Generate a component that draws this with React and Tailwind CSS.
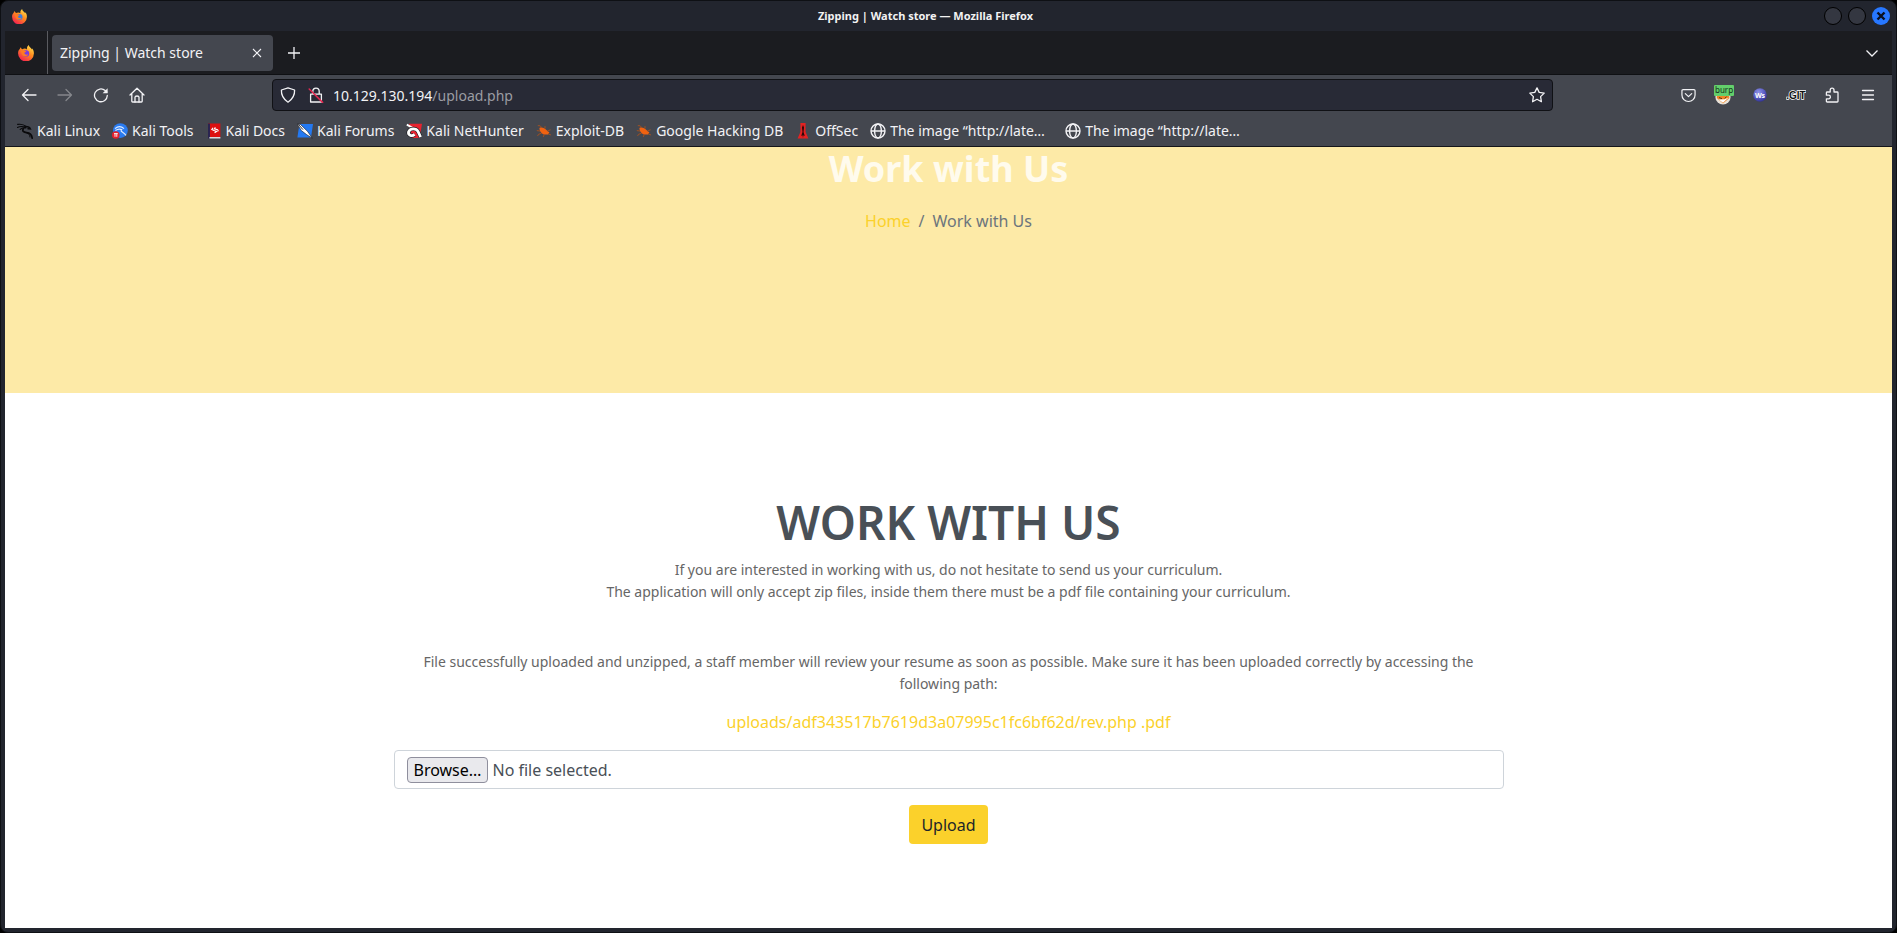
import { useState } from 'react'

const UI_FONT = 'font-["Noto_Sans",sans-serif]'

// label, icon component, and whether the title is cut off
const BOOKMARKS = [
  { label: 'Kali Linux', Icon: KaliIcon },
  { label: 'Kali Tools', Icon: KaliToolsIcon },
  { label: 'Kali Docs', Icon: KaliDocsIcon },
  { label: 'Kali Forums', Icon: KaliForumsIcon },
  { label: 'Kali NetHunter', Icon: NetHunterIcon },
  { label: 'Exploit-DB', Icon: BugIcon },
  { label: 'Google Hacking DB', Icon: BugIcon },
  { label: 'OffSec', Icon: OffSecIcon },
  { label: 'The image “http://late…', Icon: GlobeIcon, wide: true },
  { label: 'The image “http://late…', Icon: GlobeIcon, wide: true },
]

export default function App() {
  return (
    <div className={`min-h-screen bg-black flex flex-col ${UI_FONT}`}>
      <div className="flex-1 flex flex-col rounded-lg border border-[#0e1014] bg-[#22252e] overflow-hidden">
        <TitleBar />
        <div className="flex-1 flex flex-col mx-1 mb-1">
          <TabStrip />
          <NavBar />
          <BookmarksBar />
          <Page />
        </div>
      </div>
    </div>
  )
}

function TitleBar() {
  return (
    <header className="h-[30px] flex items-center gap-1 pl-[11px] pr-[6px]">
      <FirefoxIcon className="size-[15px]" core="#3b7de0" />
      <h1 className="flex-1 text-center text-[11px] font-bold text-[#f2f2f2]">
        Zipping | Watch store — Mozilla Firefox
      </h1>
      <div className="flex gap-[6px]">
        <button type="button" aria-label="Minimize" className="size-[18px] rounded-full border border-black bg-[#343741]" />
        <button type="button" aria-label="Maximize" className="size-[18px] rounded-full border border-black bg-[#343741]" />
        <button
          type="button"
          aria-label="Close window"
          className="size-[18px] rounded-full bg-[#2777ff] flex items-center justify-center"
        >
          <svg viewBox="0 0 10 10" className="size-[10px]" stroke="#0b1020" strokeWidth="2.4">
            <path d="M1.5 1.5 8.5 8.5M8.5 1.5 1.5 8.5" />
          </svg>
        </button>
      </div>
    </header>
  )
}

function TabStrip() {
  return (
    <div className="h-11 flex items-center bg-[#1b1c20] border-b border-[#0f1013] text-[#f2f2f5]">
      <div className="w-[43px] h-full flex items-center justify-center border-r border-[#5a5b60]">
        <FirefoxIcon className="size-4" core="#7a3be0" />
      </div>
      <div className="ml-1 w-[221px] h-9 flex items-center justify-between rounded bg-[#44474f] pl-2 pr-[10px]">
        <span className="text-[14px]">Zipping | Watch store</span>
        <button type="button" aria-label="Close tab">
          <svg viewBox="0 0 12 12" className="size-3" stroke="currentColor" strokeWidth="1.1">
            <path d="M2 2 10 10M10 2 2 10" />
          </svg>
        </button>
      </div>
      <button type="button" aria-label="New tab" className="ml-[15px]">
        <svg viewBox="0 0 12 12" className="size-3" stroke="currentColor" strokeWidth="1.3">
          <path d="M6 0V12M0 6H12" />
        </svg>
      </button>
      <button type="button" aria-label="List all tabs" className="ml-auto mr-[14px]">
        <svg viewBox="0 0 12 12" className="size-3" fill="none" stroke="currentColor" strokeWidth="1.3">
          <path d="M.5 3.5 6 9 11.5 3.5" />
        </svg>
      </button>
    </div>
  )
}

function NavButton({ label, children, dim }) {
  return (
    <button
      type="button"
      aria-label={label}
      className={`w-9 h-8 flex items-center justify-center ${dim ? 'text-[#85878c]' : 'text-[#f2f2f5]'}`}
    >
      {children}
    </button>
  )
}

function Stroke({ children, width = 1.3, className = 'size-4' }) {
  return (
    <svg
      viewBox="0 0 16 16"
      className={className}
      fill="none"
      stroke="currentColor"
      strokeWidth={width}
      strokeLinecap="round"
      strokeLinejoin="round"
    >
      {children}
    </svg>
  )
}

function NavBar() {
  const [url, setUrl] = useState('/upload.php')

  return (
    <nav className="h-10 flex items-center bg-[#44474f] px-[6px]">
      <NavButton label="Back">
        <Stroke><path d="M15 8H1.5M7 2.5 1.5 8 7 13.5" /></Stroke>
      </NavButton>
      <NavButton label="Forward" dim>
        <Stroke><path d="M1 8H14.5M9 2.5 14.5 8 9 13.5" /></Stroke>
      </NavButton>
      <NavButton label="Reload">
        <Stroke>
          <path d="M14.3 8.5A6.4 6.4 0 1 1 12.2 3.6L13.8 5" />
          <path d="M14.6 1.2V6.2H9.6Z" fill="currentColor" stroke="none" />
        </Stroke>
      </NavButton>
      <NavButton label="Home">
        <Stroke>
          <path d="M1 8 8 1.2 15 8M2.8 6.6V14.2Q2.8 15 3.6 15H12.4Q13.2 15 13.2 14.2V6.6" />
          <path d="M6 15V10.2Q6 9 8 9T10 10.2V15" />
        </Stroke>
      </NavButton>
      <div className="mx-auto w-[84%] max-w-[1281px] min-w-0 shrink h-8 flex items-center rounded border border-[#101115] bg-[#282a36] text-[#f2f2f5] px-[7px]">
        <Stroke><path d="M8 .8 14.6 3Q15 10.5 8 15.2 1 10.5 1.4 3Z" /></Stroke>
        <div className="ml-3">
          <Stroke>
            <path d="M4.8 7V4.4A3.2 3.2 0 0 1 11.2 4.4V7M2.6 7.2H13.4V15H2.6Z" />
            <path d="M1.2 2 14.6 15.4" stroke="#e22850" strokeWidth="1.5" />
          </Stroke>
        </div>
        <label htmlFor="url" className="ml-[9px] text-[14px]">10.129.130.194</label>
        <input
          id="url"
          value={url}
          onChange={(e) => setUrl(e.target.value)}
          className="flex-1 min-w-0 bg-transparent text-[14px] text-[#9b9ca3] outline-none"
        />
        <button type="button" aria-label="Bookmark this page">
          <Stroke>
            <path d="M8 .9 10.2 5.4 15.2 6.1 11.6 9.6 12.4 14.7 8 12.3 3.6 14.7 4.4 9.6 .8 6.1 5.8 5.4Z" />
          </Stroke>
        </button>
      </div>
      <NavButton label="Save to Pocket">
        <Stroke className="size-[15px]">
          <path d="M2.2 1.8H13.8Q15 1.8 15 3V7.4A7 7 0 0 1 1 7.4V3Q1 1.8 2.2 1.8ZM4.6 6 8 9.2 11.4 6" />
        </Stroke>
      </NavButton>
      <NavButton label="FoxyProxy">
        <FoxyProxyIcon />
      </NavButton>
      <NavButton label="WebSocket client">
        <svg viewBox="0 0 14 14" className="size-[14px]">
          <defs>
            <radialGradient id="ws" cx=".4" cy=".3" r=".75">
              <stop offset="0" stopColor="#8f93e8" />
              <stop offset=".6" stopColor="#5658c0" />
              <stop offset="1" stopColor="#2c2d8a" />
            </radialGradient>
          </defs>
          <circle cx="7" cy="7" r="6.8" fill="url(#ws)" />
          <text x="7" y="9.6" textAnchor="middle" fontSize="7" fontWeight="700" fill="#fff">Ws</text>
        </svg>
      </NavButton>
      <NavButton label="DotGit">
        <svg viewBox="0 0 20 12" className="w-5 h-3">
          <text
            x="10" y="9.6" textAnchor="middle" fontSize="10" fontWeight="700" fontFamily="Liberation Sans"
            fill="#111" stroke="#fff" strokeWidth="1.4" paintOrder="stroke"
          >
            .GIT
          </text>
        </svg>
      </NavButton>
      <NavButton label="Extensions">
        <Stroke>
          <path d="M6.2 5V3A1.9 1.9 0 0 1 10 3V5H13.2Q14 5 14 5.8V14.2Q14 15 13.2 15H3.2Q2.4 15 2.4 14.2V11.8H4.6A1.7 1.7 0 0 0 4.6 8.2H2.4V5.8Q2.4 5 3.2 5Z" />
        </Stroke>
      </NavButton>
      <NavButton label="Open menu">
        <Stroke><path d="M2.5 3.5H13.5M2.5 8H13.5M2.5 12.5H13.5" /></Stroke>
      </NavButton>
    </nav>
  )
}

function BookmarksBar() {
  return (
    <div className="h-8 flex items-center gap-3 bg-[#44474f] border-b border-[#15161a] pl-3">
      {BOOKMARKS.map(({ label, Icon, wide }, i) => (
        <a
          key={i}
          href="#bookmark"
          className={`flex items-center gap-1 text-[14px] text-[#f2f2f5] whitespace-nowrap ${wide ? 'w-[183px]' : ''}`}
        >
          <Icon />
          {label}
        </a>
      ))}
    </div>
  )
}

function Page() {
  const [file, setFile] = useState('')

  return (
    <main className="flex-1 bg-white">
      <section className="h-[246px] bg-[#fdeaa7] flex flex-col items-center">
        <h2 className="text-[36px] leading-[44px] font-bold text-[#fffbed]">Work with Us</h2>
        <ol className="mt-[18px] flex gap-2 text-[16px] leading-6 text-[#6c757d]">
          <li><a href="#home" className="text-[#fbd12b]">Home</a></li>
          <li aria-hidden="true">/</li>
          <li>Work with Us</li>
        </ol>
      </section>

      <section className="max-w-[1110px] mx-auto pt-[100px] pb-16 flex flex-col items-center text-center">
        <h2 className="text-[46px] leading-[58px] font-semibold text-[#495057]">WORK WITH US</h2>
        <div className="mt-2 text-[14px] leading-[22px] text-[#666666]">
          <p>If you are interested in working with us, do not hesitate to send us your curriculum.</p>
          <p>The application will only accept zip files, inside them there must be a pdf file containing your curriculum.</p>
          <p className="mt-12 px-7">
            File successfully uploaded and unzipped, a staff member will review your resume as soon as possible. Make
            sure it has been uploaded correctly by accessing the following path:
          </p>
        </div>
        <a href="#upload" className="mt-[15px] text-[16px] leading-6 text-[#fbd12b]">
          uploads/adf343517b7619d3a07995c1fc6bf62d/rev.php .pdf
        </a>
        <form className="w-full mt-4 flex flex-col items-center" onSubmit={(e) => e.preventDefault()}>
          <label
            htmlFor="zip"
            className="w-full h-[39px] flex items-center gap-1 rounded border border-[#ced4da] px-3 text-[16px] text-[#495057]"
          >
            <span className="h-[26px] flex items-center rounded border border-[#8f8f9d] bg-[#e9e9ed] px-[6px] text-black">
              Browse…
            </span>
            {file || 'No file selected.'}
            <input id="zip" type="file" className="sr-only" onChange={(e) => setFile(e.target.value)} />
          </label>
          <button type="submit" className="mt-4 h-[39px] rounded-sm bg-[#fbd12b] px-3 text-[16px] text-[#212529]">
            Upload
          </button>
        </form>
      </section>
    </main>
  )
}

/* ---- icons ---- */

function FirefoxIcon({ className, core }) {
  const id = `fx${core.slice(1)}`
  return (
    <svg viewBox="0 0 16 16" className={className}>
      <defs>
        <linearGradient id={id} x1=".85" y1=".05" x2=".25" y2=".95">
          <stop offset="0" stopColor="#ffe14d" />
          <stop offset=".45" stopColor="#ff8a1e" />
          <stop offset="1" stopColor="#f5244f" />
        </linearGradient>
      </defs>
      <path
        d="M3 2.2C3 3.4 3.6 3.8 4.4 4.2 6 3.2 8 3.6 9 4.4 8.6 2.6 9.4 1 10.8 0 10.8 2 13 2.6 14 4.6 14.3 4.2 14.3 3.6 14.2 3.2 15.6 5 16 7 15.9 8.6A7.9 7.9 0 0 1 .1 8.4C0 6.4.8 4.8 1.8 4 1.9 3.2 2.4 2.6 3 2.2Z"
        fill={`url(#${id})`}
      />
      <circle cx="8" cy="8.4" r="3.2" fill={core} />
      <path d="M2.6 5.6C4 4.8 5.4 5 6.4 5.8L8.4 6.2C8 7.2 6.6 7.2 6.4 8 6.6 9.6 8.6 10.2 10.2 9.2 9.4 11.6 6 12 4.4 10 3.4 8.8 3.4 7 2.6 5.6Z" fill="#ff7a22" />
    </svg>
  )
}

function FoxyProxyIcon() {
  return (
    <svg viewBox="0 0 20 20" className="size-5">
      <circle cx="9" cy="12" r="7.6" fill="#e9e2d8" />
      <path d="M3 10 15 10 15.4 13 9 18.6 2.8 13Z" fill="#ef8526" />
      <path d="M4.6 14.6 9 17.8 14.6 12.6 10.8 14.2Z" fill="#fff" />
      <path d="M5 12.6 8 13.6M12.6 11.6 10.8 13.4" stroke="#5b3210" strokeWidth="1" />
      <rect width="20" height="11" rx="1" fill="#63cf6b" />
      <text x="1" y="8" fontSize="8" fill="#14301a">burp</text>
    </svg>
  )
}

function KaliIcon() {
  return (
    <svg viewBox="0 0 16 16" className="size-4" fill="none" stroke="#0a0a0c" strokeLinecap="round">
      <path d="M.6 1.4C4 .8 7 1.6 9.4 3.6M.4 4.4C3.4 3 6 3.2 8.8 4.4M3.2 6.4C4.6 5 6.8 4.6 9 5" strokeWidth="1.1" />
      <path d="M8 3.6C10.4 3.4 12.6 4.2 13.4 6L11 5.8" strokeWidth="1.5" />
      <path d="M6.4 5.6C4.8 8 6.6 9.4 9.6 9.6 13 9.8 14.8 11.6 15.2 15.2" strokeWidth="1.7" />
      <path d="M9.6 9.8C12 10.4 13 12 13 14" strokeWidth="1" />
    </svg>
  )
}

function KaliToolsIcon() {
  return (
    <svg viewBox="0 0 16 16" className="size-4">
      <circle cx="8.4" cy="7.6" r="7.4" fill="#2a7bf0" />
      <path d="M3 5.6C6 3 9.6 3.4 12 5.6M3.4 7.6C6 5.8 8 6 9.6 6.6 7.6 9 12 8.6 14 12.4" fill="none" stroke="#dbe9ff" strokeWidth="1.2" />
      <circle cx="3.8" cy="12" r="3.8" fill="#e5202c" />
      <path d="M2 10.6H5.8M3 10.6V13.8M4.8 10.6V13.8" stroke="#fff" strokeWidth=".9" />
    </svg>
  )
}

function KaliDocsIcon() {
  return (
    <svg viewBox="0 0 16 16" className="size-4">
      <path d="M2 .4H14.4V14H2Z" fill="#dc1010" />
      <path d="M2 .4H4V15.4H2Z" fill="#2b2450" />
      <path d="M3.4 14H14.4V15.4H3.4Z" fill="#d9d9de" />
      <path d="M7 4.8 5.8 6.6 8 7.6 10.6 8.4 8.6 9.8M9.4 4.4 8.4 5.8 11.6 6.6 12.4 8.2" fill="none" stroke="#fff" strokeWidth="1.1" />
    </svg>
  )
}

function KaliForumsIcon() {
  return (
    <svg viewBox="0 0 16 16" className="size-4">
      <path d="M2.4 1H16L14 14.6H.4Z" fill="#2379f2" />
      <path d="M.2 1 3.4 1.4 10.6 8.4 15.2 15.2 9.6 11.6 4.4 7.6Z" fill="#fff" stroke="#17181c" strokeWidth=".6" />
      <path d="M1.4 1.4 6 6.6" stroke="#17181c" strokeWidth=".9" />
    </svg>
  )
}

function NetHunterIcon() {
  return (
    <svg viewBox="0 0 16 16" className="size-4">
      <path d="M3 .8H16L13.6 15H6Z" fill="#e8232f" />
      <path d="M.8 1.6 8 5.6" stroke="#fff" strokeWidth="1.8" />
      <path d="M8.6 11.4C5.6 14 1.8 11.8 2.6 8.8 4.2 5 10 4.8 12 8.4L14.6 14" fill="none" stroke="#17181c" strokeWidth="4" />
      <path d="M8.6 11.4C5.6 14 1.8 11.8 2.6 8.8 4.2 5 10 4.8 12 8.4L14.6 14" fill="none" stroke="#fff" strokeWidth="2.8" />
    </svg>
  )
}

function BugIcon() {
  return (
    <svg viewBox="0 0 16 16" className="size-4">
      <path d="M3.4 5C6 4 8.6 5 10.4 7L13.4 9.4 12 11.4 9 11.6C6.2 11.4 3.6 9 3.4 5Z" fill="#ef6211" />
      <path
        d="M6 5 4.2 2.8 1.8 2.6M9 5.6 9 3.2M11.4 8 14.6 6.8M4 8 .8 7.6M5.4 10.2 2.4 11.4 1.6 13M8.4 11.2 7.2 14M12 10.8 15 12"
        fill="none"
        stroke="#a8521f"
        strokeWidth=".9"
      />
    </svg>
  )
}

function OffSecIcon() {
  return (
    <svg viewBox="0 0 16 16" className="size-4">
      <path d="M5.4 0H10.6V9L13.4 15.6H2.6L5.4 9Z" fill="#e32222" />
      <path d="M8 2 9 4.4 8.5 9 9.8 13 8.4 12.2 8 15 7.6 12.2 6.2 13 7.5 9 7 4.4Z" fill="#2a0808" />
    </svg>
  )
}

function GlobeIcon() {
  return (
    <svg viewBox="0 0 16 16" className="size-4" fill="none" stroke="#f2f2f5" strokeWidth="1.4">
      <circle cx="8" cy="8" r="7" />
      <ellipse cx="8" cy="8" rx="3.4" ry="7" />
      <path d="M1 8H15" />
    </svg>
  )
}
